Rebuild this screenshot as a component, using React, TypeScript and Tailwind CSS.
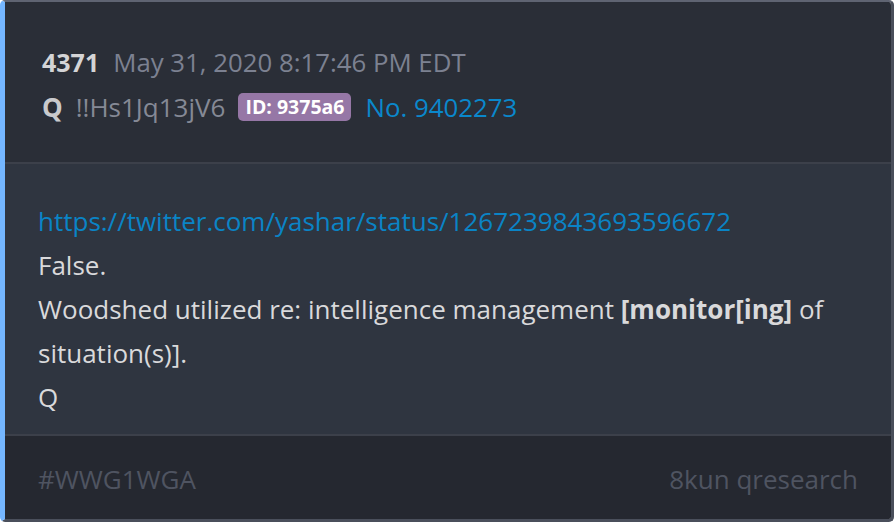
export default function App() {
  return (
    <div className="w-[894px] h-[522px] bg-white" style={{ fontFamily: '"Open Sans", "Noto Sans", sans-serif' }}>
      <div className="flex flex-col h-[522px] rounded-[5px] overflow-hidden border-t-2 border-r-[3px] border-b-[3px] border-l-[5px] border-t-[#5f6472] border-r-[#4a4f5b] border-b-[#4a4f5b] border-l-[#74b6ff]">
        {/* header */}
        <div className="h-[160px] bg-[#2a2e37] pl-[37px] pt-[41px] flex flex-col gap-[7px]">
          <div className="flex items-baseline gap-[14px] text-[26px] leading-[38px]">
            <span className="font-bold text-[#d4d4d6] text-[25px]">4371</span>
            <span className="text-[#7c8191] text-[25.8px]">May 31, 2020 8:17:46 PM EDT</span>
          </div>
          <div className="flex items-center text-[26px] leading-[38px]">
            <span className="font-bold text-[#c9cacd]">Q</span>
            <span className="ml-[13px] text-[#858995]">!!Hs1Jq13jV6</span>
            <span className="ml-[13px] rounded-[5px] bg-[#9677a6] px-[7px] h-[28px] flex items-center text-[19.5px] font-bold text-white">ID: 9375a6</span>
            <span className="ml-[14px] text-[#0a88cc] text-[25.8px]">No. 9402273</span>
          </div>
        </div>
        <div className="h-[2px] bg-[#3c404a]" />
        {/* body */}
        <div className="h-[270px] bg-[#2f3540] pl-[33px] pt-[35px] text-[26px] leading-[44px] text-[#d9d9db]">
          <div className="text-[#0a84c6]">https://twitter.com/yashar/status/1267239843693596672</div>
          <div>False.</div>
          <div>
            Woodshed utilized re: intelligence management <span className="font-bold">[monitor[ing]</span> of
          </div>
          <div>situation(s)].</div>
          <div>Q</div>
        </div>
        <div className="h-[2px] bg-[#3c404a]" />
        {/* footer */}
        <div className="flex-1 bg-[#252830] pl-[33px] pr-[33px] pt-[3px] flex items-center justify-between text-[26px] text-[#4f5461]">
          <span>#WWG1WGA</span>
          <span>8kun qresearch</span>
        </div>
      </div>
    </div>
  );
}
